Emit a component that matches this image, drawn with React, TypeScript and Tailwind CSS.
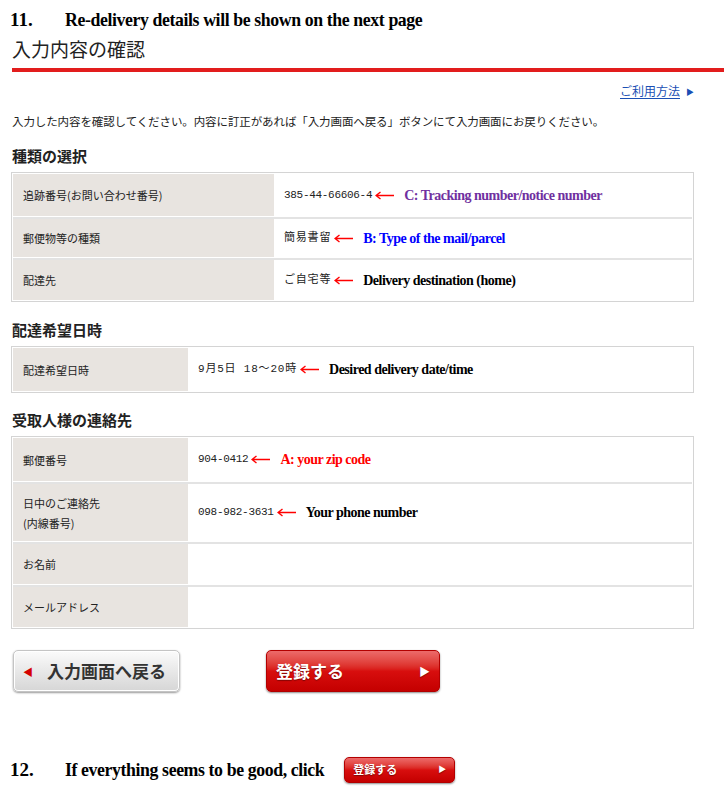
import type { ReactNode } from "react";

const jp = "font-['MS_UI_Gothic','Noto_Sans_CJK_JP',sans-serif]";
const serif = "font-['Liberation_Serif','Noto_Sans_CJK_JP',serif]";

function Arrow() {
  return (
    <svg width="19" height="9" viewBox="0 0 19 9" className="ml-[3px] shrink-0">
      <path d="M1 4.5H19M5.5 1L1 4.5L5.5 8" stroke="#ff0000" strokeWidth="1.4" fill="none" />
    </svg>
  );
}

function Note({ color, children }: { color: string; children: ReactNode }) {
  return (
    <span className={`${serif} font-bold text-[14px] tracking-[-0.5px] ml-[10px]`} style={{ color }}>
      {children}
    </span>
  );
}

interface Row {
  label: ReactNode;
  value?: ReactNode;
  h: string;
}

function InfoTable({ rows, labelW }: { rows: Row[]; labelW: string }) {
  return (
    <div className="w-[683px] border border-[#d4d4d4] bg-white p-[1px]">
      {rows.map((r, i) => (
        <div key={i} className={`flex ${i > 0 ? "border-t-2 border-[#e3e3e3] mt-px" : ""} ${r.h}`}>
          <div className={`${labelW} bg-[#e8e4e0] flex items-center pl-[10px] text-[11px] text-[#222] leading-[20px]`}>
            {r.label}
          </div>
          <div className="flex-1 flex items-center pl-[10px]">{r.value}</div>
        </div>
      ))}
    </div>
  );
}

function Val({ children, wide }: { children: ReactNode; wide?: boolean }) {
  return (
    <span
      className={`font-['Liberation_Mono','Noto_Sans_CJK_JP',monospace] text-[11px] text-[#222] ${
        wide ? "tracking-[0.8px]" : "tracking-[-0.3px]"
      }`}
    >
      {children}
    </span>
  );
}

function RedButton({ small }: { small?: boolean }) {
  return (
    <div
      className={`flex items-center justify-between rounded-[5px] border border-[#b30000] bg-gradient-to-b from-[#ec6a6a] via-[#d80e0e] to-[#c40000] shadow-[0_1px_2px_rgba(0,0,0,0.45)] text-white font-bold [text-shadow:0_1px_1px_rgba(0,0,0,0.4)] ${
        small ? "w-[111px] h-[26px] px-[8px] text-[11px]" : "w-[174px] h-[42px] px-[9px] text-[17px]"
      }`}
    >
      <span>登録する</span>
      <span className={small ? "text-[8px]" : "text-[11px]"}>▶</span>
    </div>
  );
}

export default function App() {
  return (
    <div className={`${jp} bg-white w-[724px] min-h-[800px] text-[#222]`}>
      <div className={`${serif} font-bold text-[19px] text-black flex items-center pt-[7px] pl-[10px] h-[33px]`}>
        <span className="w-[55px]">11.</span>
        <span className="text-[17.8px] tracking-[-0.4px]">Re-delivery details will be shown on the next page</span>
      </div>
      <div className="pl-[12px] text-[19px] leading-[26px] mt-[3px]">入力内容の確認</div>
      <div className="ml-[12px] mt-[6px] h-[4px] bg-[#e21d1d]" />

      <div className="flex justify-end pr-[30px] mt-[11px] text-[12px]">
        <span className="text-[#1a4fb4] border-b border-[#1a4fb4] leading-[15px]">ご利用方法</span>
        <span className="text-[#1a4fb4] text-[8px] ml-[6px] mt-[3px]">▶</span>
      </div>

      <div className="pl-[12px] mt-[14px] text-[11.5px] leading-[16px] tracking-[-0.1px]">
        入力した内容を確認してください。内容に訂正があれば「入力画面へ戻る」ボタンにて入力画面にお戻りください。
      </div>

      <div className="pl-[11px]">
        <div className="font-bold text-[15px] mt-[18px] mb-[7px] leading-[18px] pl-px">種類の選択</div>
        <InfoTable
          labelW="w-[261px]"
          rows={[
            {
              label: "追跡番号(お問い合わせ番号)",
              h: "h-[42px]",
              value: (
                <>
                  <Val>385-44-66606-4</Val>
                  <Arrow />
                  <Note color="#7030a0">C: Tracking number/notice number</Note>
                </>
              ),
            },
            {
              label: "郵便物等の種類",
              h: "h-[40px]",
              value: (
                <>
                  <Val wide>簡易書留</Val>
                  <Arrow />
                  <Note color="#0000ff">B: Type of the mail/parcel</Note>
                </>
              ),
            },
            {
              label: "配達先",
              h: "h-[42px]",
              value: (
                <>
                  <Val wide>ご自宅等</Val>
                  <Arrow />
                  <Note color="#000000">Delivery destination (home)</Note>
                </>
              ),
            },
          ]}
        />

        <div className="font-bold text-[15px] mt-[19px] mb-[7px] leading-[18px] pl-px">配達希望日時</div>
        <InfoTable
          labelW="w-[175px]"
          rows={[
            {
              label: "配達希望日時",
              h: "h-[43px]",
              value: (
                <>
                  <Val wide>9月5日 18〜20時</Val>
                  <Arrow />
                  <Note color="#000000">Desired delivery date/time</Note>
                </>
              ),
            },
          ]}
        />

        <div className="font-bold text-[15px] mt-[18px] mb-[7px] leading-[18px] pl-px">受取人様の連絡先</div>
        <InfoTable
          labelW="w-[175px]"
          rows={[
            {
              label: "郵便番号",
              h: "h-[43px]",
              value: (
                <>
                  <Val>904-0412</Val>
                  <Arrow />
                  <Note color="#ff0000">A: your zip code</Note>
                </>
              ),
            },
            {
              label: (
                <span>
                  日中のご連絡先
                  <br />
                  (内線番号)
                </span>
              ),
              h: "h-[59px]",
              value: (
                <>
                  <Val>098-982-3631</Val>
                  <Arrow />
                  <Note color="#000000">Your phone number</Note>
                </>
              ),
            },
            { label: "お名前", h: "h-[42px]" },
            { label: "メールアドレス", h: "h-[42px]" },
          ]}
        />

        <div className="flex items-center mt-[21px] pl-[2px]">
          <div className="w-[167px] h-[42px] flex items-center rounded-[5px] border border-[#c4c4c4] bg-gradient-to-b from-[#fbfbfb] to-[#d6d6d6] shadow-[0_1px_2px_rgba(0,0,0,0.4),inset_0_0_0_1px_#ffffff] pl-[9px]">
            <span className="text-[#d40000] text-[10px]">◀</span>
            <span className="ml-[14px] font-bold text-[17px] text-[#333]">入力画面へ戻る</span>
          </div>
          <div className="ml-[86px]">
            <RedButton />
          </div>
        </div>
      </div>

      <div className={`${serif} font-bold text-black flex items-center pl-[10px] mt-[64px]`}>
        <span className="w-[55px] text-[19px]">12.</span>
        <span className="text-[17.8px] tracking-[-0.4px]">If everything seems to be good, click</span>
        <span className="ml-[20px]">
          <RedButton small />
        </span>
      </div>
    </div>
  );
}
